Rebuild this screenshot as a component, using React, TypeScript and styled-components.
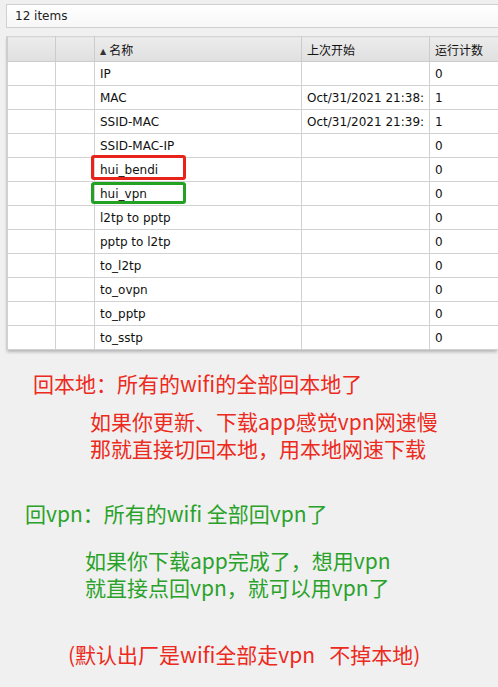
import React from 'react';
import styled, { createGlobalStyle } from 'styled-components';

const GlobalStyle = createGlobalStyle`
  html, body {
    margin: 0;
    padding: 0;
    background: #f0f0f0;
  }
  body {
    width: 498px;
    height: 687px;
    overflow: hidden;
    font-family: "DejaVu Sans", Verdana, sans-serif;
  }
`;

const Page = styled.div`
  width: 498px;
  padding-top: 4px;
`;

const CountBar = styled.div`
  margin-left: 6px;
  height: 22px;
  border: 1px solid #cfcfcf;
  border-right: none;
  background: linear-gradient(#ffffff, #f7f7f7);
  display: flex;
  align-items: center;
  padding-left: 8px;
  font-size: 12px;
  color: #222;
`;

const TableWrap = styled.div`
  margin: 8px 0 0 6px;
  overflow: hidden;
  box-shadow: 0 3px 3px -1px rgba(0, 0, 0, 0.25);
  border-left: 1px solid #cfcfcf;
`;

const Grid = styled.table`
  border-collapse: collapse;
  table-layout: fixed;
  width: 560px;
  background: #fff;
  font-size: 12px;
  color: #111;
`;

const HeadCell = styled.th`
  height: 24px;
  padding: 0 5px;
  text-align: left;
  font-weight: normal;
  font-family: "DejaVu Sans", "Noto Sans CJK SC", sans-serif;
  background: linear-gradient(#ececec, #e0e0e0);
  border: 1px solid #cccccc;
  border-top-color: #d4d4d4;
  white-space: nowrap;
`;

const Arrow = styled.span`
  font-size: 8px;
  margin-right: 3px;
  color: #333;
  position: relative;
  top: -1px;
`;

const Cell = styled.td`
  position: relative;
  height: 23px;
  padding: 0 5px;
  border: 1px solid #d2d2d2;
  white-space: nowrap;
`;

const Clip = styled.span`
  display: block;
  overflow: hidden;
  white-space: nowrap;
`;

const Mark = styled.span<{ $color: string; $top: number; $h: number }>`
  position: absolute;
  left: -4px;
  top: ${(p) => p.$top}px;
  width: 89px;
  height: ${(p) => p.$h}px;
  border: 3px solid ${(p) => p.$color};
  border-radius: 3px;
  pointer-events: none;
`;

const Notes = styled.div`
  font-family: "Noto Sans CJK SC", "Microsoft YaHei", sans-serif;
  font-size: 21px;
  line-height: 27px;
  padding-top: 20px;
`;

const Note = styled.p<{ $color: string; $indent: number; $gap: number }>`
  margin: ${(p) => p.$gap}px 0 0 ${(p) => p.$indent}px;
  color: ${(p) => p.$color};
  white-space: pre;
`;

const RED = '#ec2a20';
const GREEN = '#2aa22a';

type Row = { name: string; last?: string; count: number; mark?: 'red' | 'green' };

const rows: Row[] = [
  { name: 'IP', count: 0 },
  { name: 'MAC', last: 'Oct/31/2021 21:38:44', count: 1 },
  { name: 'SSID-MAC', last: 'Oct/31/2021 21:39:02', count: 1 },
  { name: 'SSID-MAC-IP', count: 0 },
  { name: 'hui_bendi', count: 0, mark: 'red' },
  { name: 'hui_vpn', count: 0, mark: 'green' },
  { name: 'l2tp to pptp', count: 0 },
  { name: 'pptp to l2tp', count: 0 },
  { name: 'to_l2tp', count: 0 },
  { name: 'to_ovpn', count: 0 },
  { name: 'to_pptp', count: 0 },
  { name: 'to_sstp', count: 0 },
];

export default function App() {
  return (
    <Page>
      <GlobalStyle />
      <CountBar>12 items</CountBar>
      <TableWrap>
        <Grid>
          <colgroup>
            <col style={{ width: 48 }} />
            <col style={{ width: 39 }} />
            <col style={{ width: 207 }} />
            <col style={{ width: 128 }} />
            <col style={{ width: 138 }} />
          </colgroup>
          <thead>
            <tr>
              <HeadCell />
              <HeadCell />
              <HeadCell>
                <Arrow>▲</Arrow>名称
              </HeadCell>
              <HeadCell>上次开始</HeadCell>
              <HeadCell>运行计数</HeadCell>
            </tr>
          </thead>
          <tbody>
            {rows.map((r) => (
              <tr key={r.name}>
                <Cell />
                <Cell />
                <Cell>
                  {r.mark === 'red' && <Mark $color="#e8231c" $top={-3} $h={19} />}
                  {r.mark === 'green' && <Mark $color="#23a123" $top={0} $h={16} />}
                  {r.name}
                </Cell>
                <Cell>
                  <Clip>{r.last ?? ''}</Clip>
                </Cell>
                <Cell>{r.count}</Cell>
              </tr>
            ))}
          </tbody>
        </Grid>
      </TableWrap>
      <Notes>
        <Note $color={RED} $indent={33} $gap={0}>
          回本地：所有的wifi的全部回本地了
        </Note>
        <Note $color={RED} $indent={90} $gap={11}>
          如果你更新、下载app感觉vpn网速慢
          <br />
          那就直接切回本地，用本地网速下载
        </Note>
        <Note $color={GREEN} $indent={25} $gap={38}>
          回vpn：所有的wifi 全部回vpn了
        </Note>
        <Note $color={GREEN} $indent={85} $gap={20}>
          如果你下载app完成了，想用vpn
          <br />
          就直接点回vpn，就可以用vpn了
        </Note>
        <Note $color={RED} $indent={68} $gap={40}>
          (默认出厂是wifi全部走vpn{'   '}不掉本地)
        </Note>
      </Notes>
    </Page>
  );
}
